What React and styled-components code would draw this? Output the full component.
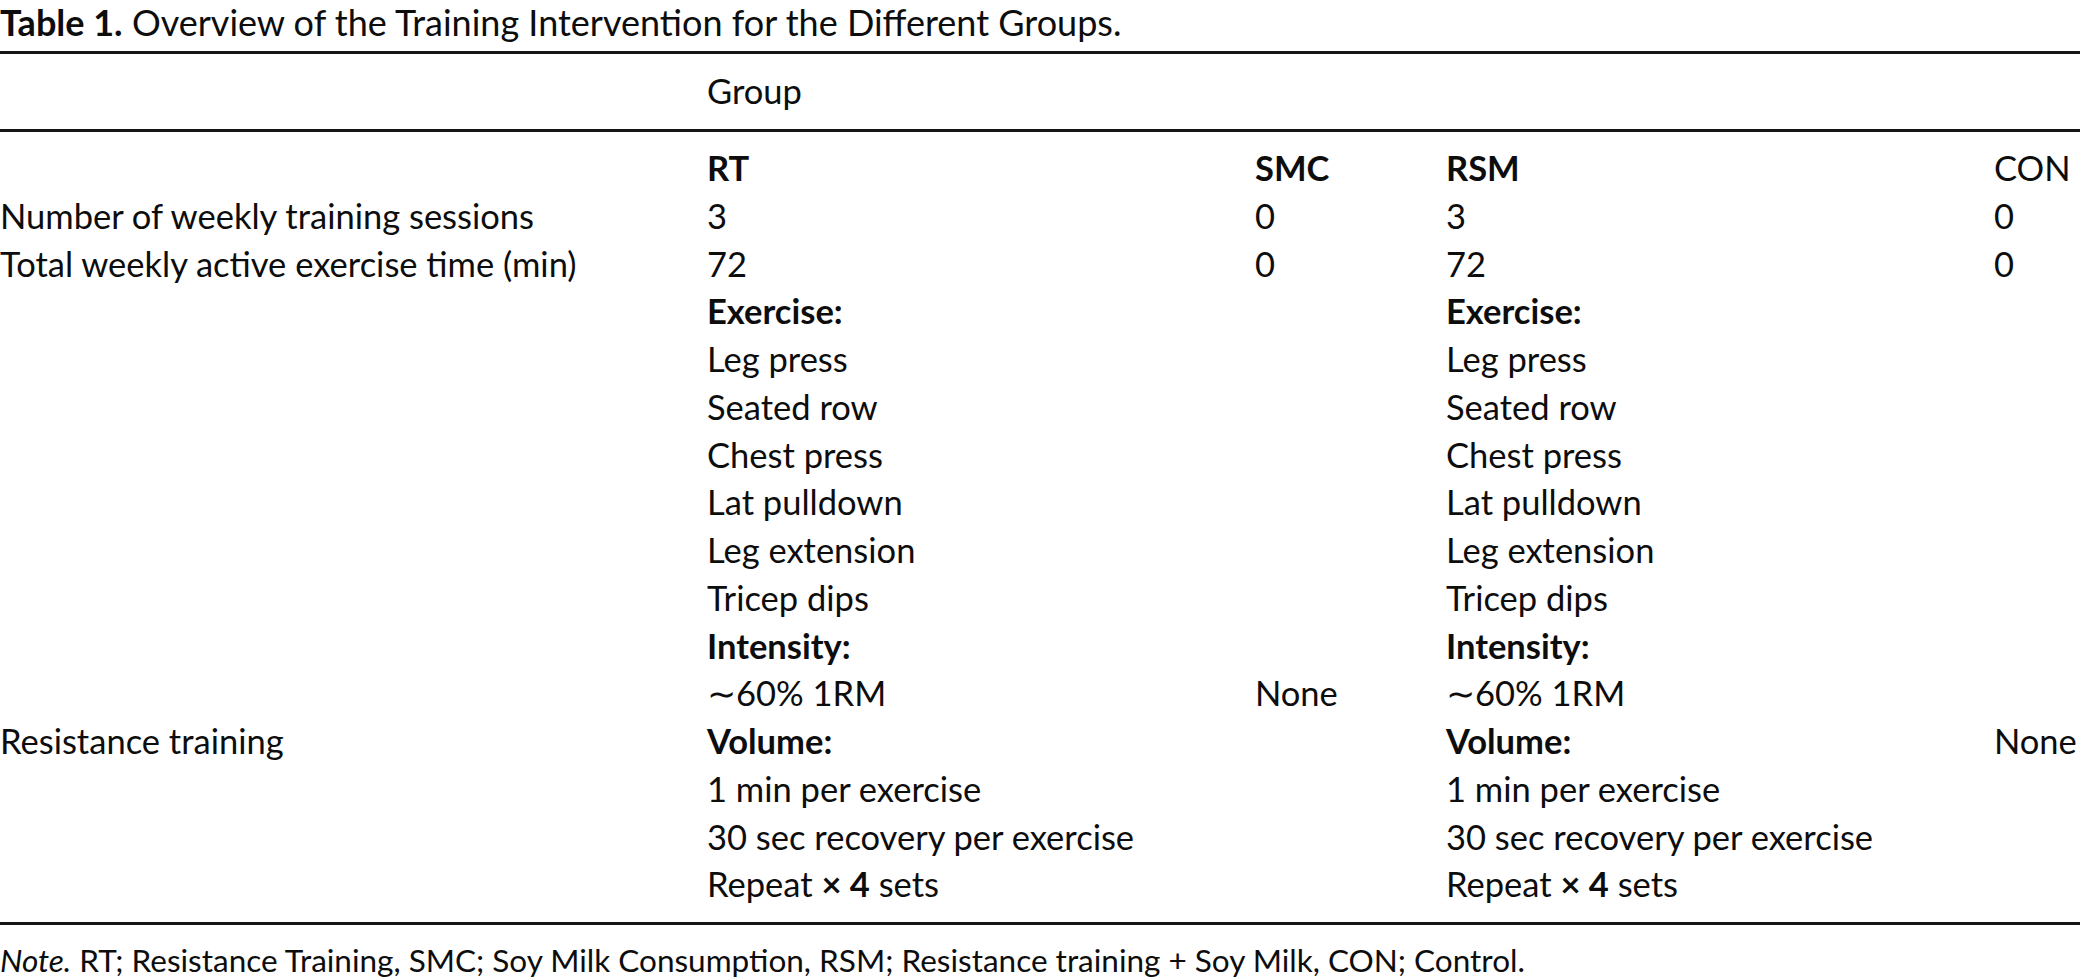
import React from 'react'
import styled, { createGlobalStyle } from 'styled-components'

const GlobalStyle = createGlobalStyle`
  *, *::before, *::after {
    box-sizing: border-box;
  }
  html, body {
    margin: 0;
    padding: 0;
    background: #fff;
    overflow: hidden;
  }
  body {
    width: 2080px;
    height: 980px;
    font-family: Lato, "Open Sans", "Liberation Sans", sans-serif;
    color: #0d0d0d;
  }
`

const Page = styled.div`
  width: 2080px;
  height: 980px;
  overflow: hidden;
`

const Caption = styled.div`
  height: 51px;
  font-size: 36px;
  line-height: 44px;
  white-space: nowrap;

  b {
    font-weight: 700;
  }
`

const Rule = styled.div`
  width: 2080px;
  height: 3px;
  background: #151515;
`

const GroupRow = styled.div`
  height: 75px;
  padding-left: 707px;
  font-size: 34.5px;
  line-height: 74px;
`

const Body = styled.div`
  display: grid;
  grid-template-columns: 707px 548px 191px 548px 200px;
  grid-auto-rows: 47.75px;
  align-content: start;
  height: 790px;
  padding-top: 12px;
`

const Cell = styled.div`
  font-size: 34.5px;
  line-height: 47.75px;
  white-space: nowrap;
  font-weight: ${props => props.bold ? 700 : 400};
`

const Note = styled.div`
  padding-top: 18px;
  font-size: 31.5px;
  line-height: 34px;
  white-space: nowrap;

  em {
    font-style: italic;
  }
`

const Times = styled.b`
  font-weight: 700;
`

const repeatSets = (
  <>Repeat <Times>× 4</Times> sets</>
)

// each entry is one printed line: [label, RT, SMC, RSM, CON]
const lines = [
  [null, { t: 'RT', b: true }, { t: 'SMC', b: true }, { t: 'RSM', b: true }, 'CON'],
  ['Number of weekly training sessions', '3', '0', '3', '0'],
  ['Total weekly active exercise time (min)', '72', '0', '72', '0'],
  [null, { t: 'Exercise:', b: true }, null, { t: 'Exercise:', b: true }, null],
  [null, 'Leg press', null, 'Leg press', null],
  [null, 'Seated row', null, 'Seated row', null],
  [null, 'Chest press', null, 'Chest press', null],
  [null, 'Lat pulldown', null, 'Lat pulldown', null],
  [null, 'Leg extension', null, 'Leg extension', null],
  [null, 'Tricep dips', null, 'Tricep dips', null],
  [null, { t: 'Intensity:', b: true }, null, { t: 'Intensity:', b: true }, null],
  [null, '∼60% 1RM', 'None', '∼60% 1RM', null],
  ['Resistance training', { t: 'Volume:', b: true }, null, { t: 'Volume:', b: true }, 'None'],
  [null, '1 min per exercise', null, '1 min per exercise', null],
  [null, '30 sec recovery per exercise', null, '30 sec recovery per exercise', null],
  [null, repeatSets, null, repeatSets, null]
]

const renderCell = (value, key) => {
  if (value === null) return <Cell key={key} />
  if (value && value.t) return <Cell key={key} bold>{value.t}</Cell>
  return <Cell key={key}>{value}</Cell>
}

export default function App () {
  return (
    <Page>
      <GlobalStyle />
      <Caption>
        <b>Table 1.</b> Overview of the Training Intervention for the Different Groups.
      </Caption>
      <Rule />
      <GroupRow>Group</GroupRow>
      <Rule />
      <Body>
        {lines.map((line, i) => line.map((value, j) => renderCell(value, `${i}-${j}`)))}
      </Body>
      <Rule />
      <Note>
        <em>Note.</em> RT; Resistance Training, SMC; Soy Milk Consumption, RSM; Resistance training + Soy Milk, CON; Control.
      </Note>
    </Page>
  )
}
